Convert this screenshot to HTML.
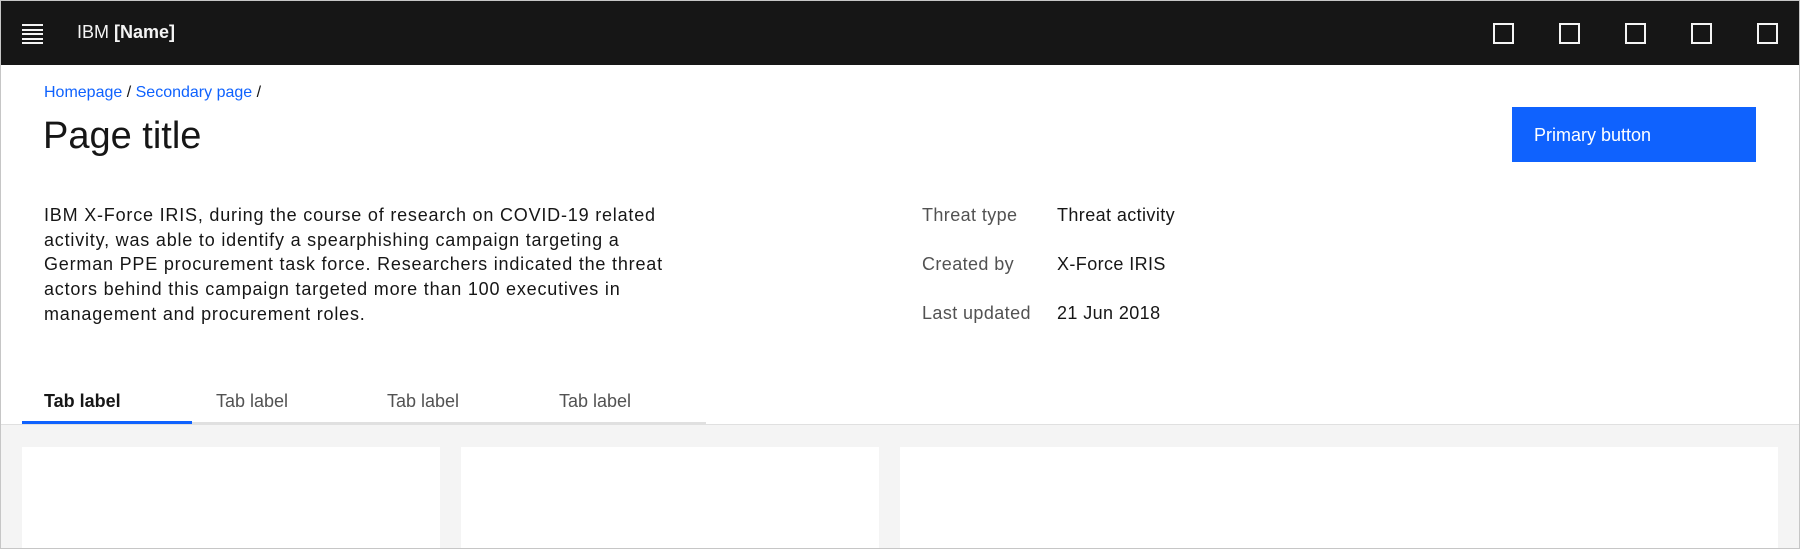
<!DOCTYPE html>
<html><head><style>
*{margin:0;padding:0;box-sizing:border-box}
body{width:1800px;height:549px;overflow:hidden;background:#fff;font-family:"Liberation Sans",sans-serif;position:relative;color:#161616}
.a{position:absolute}
#frame{position:absolute;left:0;top:0;width:1800px;height:549px;border:1px solid #c6c6c6;pointer-events:none;z-index:5}
.hdr{left:0;top:0;width:1800px;height:65px;background:#161616}
.sq{width:21px;height:21px;border:2px solid #f4f4f4;top:23px}
.ham{left:22px;width:21px;height:2px;background:#f4f4f4}
.t{font-size:18px;line-height:24.7px;white-space:nowrap;letter-spacing:0.4px}
.tab{top:391px;font-size:18px;color:#525252}
</style></head><body>
<div id="frame"></div>
<div class="a hdr"></div>
<div class="a ham" style="top:24px"></div><div class="a ham" style="top:28.5px"></div><div class="a ham" style="top:33px"></div><div class="a ham" style="top:37.5px"></div><div class="a ham" style="top:42px"></div>
<div class="a" style="left:77px;top:22px;color:#f4f4f4;font-size:18px">IBM <b>[Name]</b></div>
<div class="a sq" style="left:1493px"></div><div class="a sq" style="left:1559px"></div><div class="a sq" style="left:1625px"></div><div class="a sq" style="left:1691px"></div><div class="a sq" style="left:1757px"></div>
<div class="a" style="left:44px;top:84px;font-size:16px;color:#161616"><span style="color:#0f62fe">Homepage</span> / <span style="color:#0f62fe">Secondary page</span> /</div>
<div class="a" style="left:43px;top:115px;font-size:38px;font-weight:300">Page title</div>
<div class="a" style="left:1512px;top:107px;width:244px;height:55px;background:#0f62fe;color:#fff;font-size:18px;padding:18px 0 0 22px">Primary button</div>
<div class="a t" style="left:44px;top:203px;letter-spacing:0.8px">IBM X-Force IRIS, during the course of research on COVID-19 related<br>activity, was able to identify a spearphishing campaign targeting a<br>German PPE procurement task force. Researchers indicated the threat<br>actors behind this campaign targeted more than 100 executives in<br>management and procurement roles.</div>
<div class="a t" style="left:922px;top:203px;color:#525252">Threat type</div><div class="a t" style="left:1057px;top:203px">Threat activity</div>
<div class="a t" style="left:922px;top:252px;color:#525252">Created by</div><div class="a t" style="left:1057px;top:252px">X-Force IRIS</div>
<div class="a t" style="left:922px;top:301px;color:#525252">Last updated</div><div class="a t" style="left:1057px;top:301px">21 Jun 2018</div>
<div class="a tab" style="left:44px;color:#161616;font-weight:bold">Tab label</div>
<div class="a tab" style="left:216px">Tab label</div>
<div class="a tab" style="left:387px">Tab label</div>
<div class="a tab" style="left:559px">Tab label</div>
<div class="a" style="left:0;top:424px;width:1800px;height:125px;background:#f4f4f4;border-top:1px solid #e0e0e0"></div>
<div class="a" style="left:192px;top:422px;width:514px;height:2px;background:#e0e0e0"></div>
<div class="a" style="left:22px;top:421px;width:170px;height:3px;background:#0f62fe"></div>
<div class="a" style="left:22px;top:447px;width:418px;height:102px;background:#fff"></div>
<div class="a" style="left:461px;top:447px;width:418px;height:102px;background:#fff"></div>
<div class="a" style="left:900px;top:447px;width:878px;height:102px;background:#fff"></div>
</body></html>
